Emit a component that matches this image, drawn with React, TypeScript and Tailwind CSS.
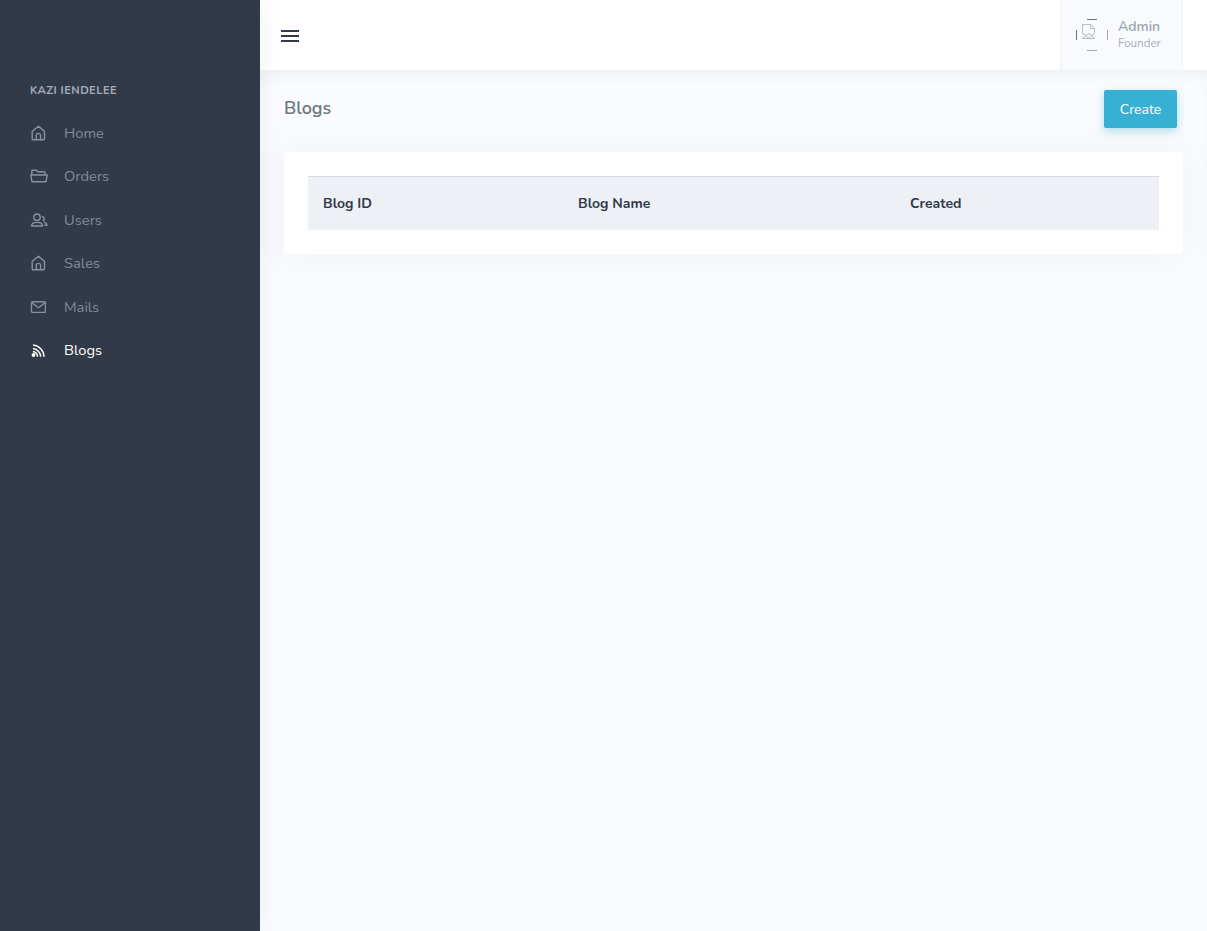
import React from 'react';

const font = "font-['Nunito','Lato','Noto_Sans',sans-serif]";

const HomeIcon = () => (
  <svg width="16" height="16" viewBox="0 0 16 16" fill="none" stroke="currentColor" strokeWidth="1.4" strokeLinejoin="round">
    <path d="M2.2 6.400 8.500 1.200l6 5.200v7.300a1 1 0 0 1-1 1H3.200a1 1 0 0 1-1-1z" />
    <path d="M6.300 14.600V10.500a2.100 2.100 0 0 1 4.300 0v4.100" />
  </svg>
);

const FolderIcon = () => (
  <svg width="18" height="16" viewBox="0 0 18 16" fill="none" stroke="currentColor" strokeWidth="1.4" strokeLinejoin="round">
    <path d="M1.800 7V3.200a1 1 0 0 1 1-1h3.800l1.400 1.600h6a1 1 0 0 1 1 1V7" />
    <path d="M.8 7h16.400l-1 6a1 1 0 0 1-1 .8H2.800a1 1 0 0 1-1-.8z" />
  </svg>
);

const UsersIcon = () => (
  <svg width="18" height="16" viewBox="0 0 18 16" fill="none" stroke="currentColor" strokeWidth="1.4" strokeLinejoin="round">
    <circle cx="7" cy="5.200" r="3.200" />
    <path d="M1.500 14c0-2.400 2.200-3.600 5.500-3.600s5.500 1.200 5.500 3.600z" />
    <path d="M11.800 4.800a2.200 2.200 0 0 1 1.200 4.200M14 10.400c1.800.3 3 1.200 3 2.800h-2.800" />
  </svg>
);

const MailIcon = () => (
  <svg width="16" height="16" viewBox="0 0 16 16" fill="none" stroke="currentColor" strokeWidth="1.400" strokeLinejoin="round">
    <rect x="1.500" y="2.800" width="14" height="10.600" rx="1.200" />
    <path d="m2 3.800 6.500 5 6.500-5" />
  </svg>
);

const RssIcon = () => (
  <svg width="16" height="16" viewBox="0 0 16 16" fill="none" stroke="currentColor" strokeWidth="1.500">
    <circle cx="3.500" cy="13" r="1.900" fill="currentColor" stroke="none" />
    <path d="M3 9.500A5.500 5.500 0 0 1 7.500 14.800" />
    <path d="M3 6.400A8.700 8.700 0 0 1 10.700 14.800" />
    <path d="M3 3.100A12 12 0 0 1 14 14.800" />
  </svg>
);

const NavItem = ({ icon, label, active }: { icon: React.ReactNode; label: string; active?: boolean }) => (
  <a className={`flex h-[43.5px] items-center ${active ? 'text-white' : 'text-[#7f8b9c]'}`}>
    <span className={`flex w-[34px] shrink-0 ${active ? 'text-white' : 'text-[#87929f]'}`}>{icon}</span>
    <span className="text-[14.72px]">{label}</span>
  </a>
);

const Sidebar = () => (
  <aside className="relative z-10 w-[260px] shrink-0 bg-[#323a49] px-[30px] pt-[84px] shadow-[0_0_28px_rgba(0,0,0,0.06)]">
    <div className="mb-[13px] text-[11.2px] leading-[14px] font-bold tracking-[0.45px] text-[#a3adb9]">KAZI IENDELEE</div>
    <nav className="flex flex-col">
      <NavItem icon={<HomeIcon />} label="Home" />
      <NavItem icon={<FolderIcon />} label="Orders" />
      <NavItem icon={<UsersIcon />} label="Users" />
      <NavItem icon={<HomeIcon />} label="Sales" />
      <NavItem icon={<MailIcon />} label="Mails" />
      <NavItem icon={<RssIcon />} label="Blogs" active />
    </nav>
  </aside>
);

const Avatar = () => (
  <svg width="32" height="32" viewBox="0 0 32 32" fill="none">
    <path d="M11 .5h10" stroke="#6f7377" />
    <path d="M11 31.500h10" stroke="#a5a8ab" />
    <path d="M.5 11v10" stroke="#6f7377" />
    <path d="M31.500 11v10" stroke="#a5a8ab" />
    <path d="M6.500 5.500h8l4 4v5l-2.500 2-3-2-3 2-3-2-.5.4zM6.500 19l3-2 3 2 3-2 3 2v.5h-12zM14.500 5.500v4h4" stroke="#b3b5b8" strokeWidth="0.9" />
  </svg>
);

const Header = () => (
  <header className="flex h-[70px] shrink-0 items-stretch justify-between bg-white pl-[21px] pr-[24px]">
    <div className="flex items-center pt-[2px]">
      <div className="flex w-[18px] flex-col gap-[3px]">
        <span className="h-[2px] bg-[#323a49]" />
        <span className="h-[2px] bg-[#323a49]" />
        <span className="h-[2px] bg-[#323a49]" />
      </div>
    </div>
    <div className="flex w-[123px] items-center border-x border-[#eef1f6] bg-[#f9fafd] pl-[15px]">
      <Avatar />
      <div className="ml-[10px] -mt-[2px]">
        <div className="text-[14px] leading-[18px] font-semibold text-[#9aa3ad]">Admin</div>
        <div className="text-[11.6px] leading-[15px] text-[#a8b0b9]">Founder</div>
      </div>
    </div>
  </header>
);

const Th = ({ children, className }: { children: React.ReactNode; className: string }) => (
  <div className={`px-[15px] text-[14px] font-bold text-[#323a49] ${className}`}>{children}</div>
);

export default function App() {
  return (
    <div className={`flex h-[931px] overflow-hidden bg-[#f9fbfe] ${font}`}>
      <Sidebar />
      <div className="flex min-w-0 flex-1 flex-col">
        <Header />
        <main className="px-[24px] pt-[20px] shadow-[inset_0_10px_20px_-10px_rgba(50,60,80,0.08)]">
          <div className="flex items-start justify-between pr-[6px]">
            <h1 className="mt-[7px] text-[18px] leading-[22px] font-semibold text-[#6c757d]">Blogs</h1>
            <button className="h-[38px] w-[73px] rounded-[2px] bg-[#38b0d4] pt-[1px] text-[14px] text-white shadow-[0_3px_9px_rgba(56,176,212,0.4)]">Create</button>
          </div>
          <section className="mt-[24px] rounded-[5px] bg-white p-[24px] shadow-[0_0_40px_rgba(50,60,90,0.05)]">
            <div className="flex h-[54px] items-center border-t border-[#d5dbe1] bg-[#edf0f5]">
              <Th className="w-[255px]">Blog ID</Th>
              <Th className="w-[332px]">Blog Name</Th>
              <Th className="flex-1">Created</Th>
            </div>
          </section>
        </main>
      </div>
    </div>
  );
}
